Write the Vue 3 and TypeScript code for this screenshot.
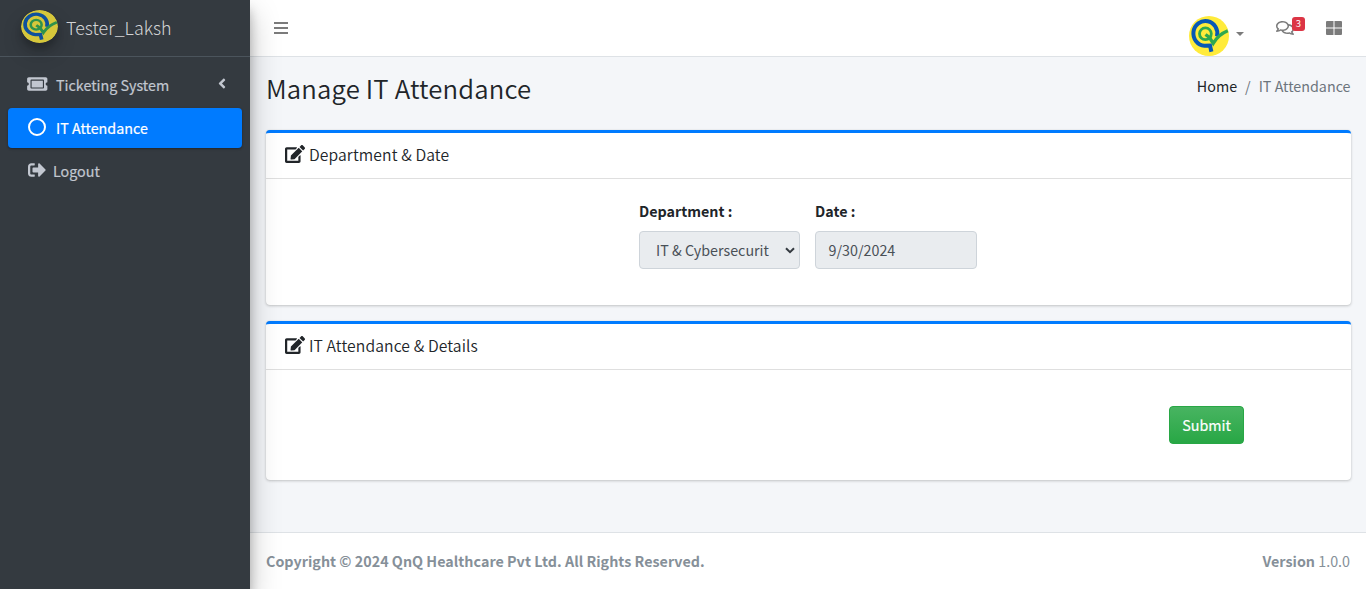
<script setup lang="ts">
import { defineComponent, h } from 'vue'

const QLogo = defineComponent({
  setup: () => () =>
    h('svg', { viewBox: '0 0 40 40', preserveAspectRatio: 'none', 'aria-hidden': 'true' }, [
      h('circle', { cx: 20, cy: 20, r: 20, fill: '#ffeb3b' }),
      h('path', { d: 'M28 20.5 A12 12.4 0 1 0 15.5 29.8 L21 29.6 L22.4 35.8', fill: 'none', stroke: '#0757b5', 'stroke-width': 4 }),
      h('circle', { cx: 16.4, cy: 17.8, r: 5.9, fill: 'none', stroke: '#2fa84f', 'stroke-width': 2.8 }),
      h('path', { d: 'M16.5 18.5 L20.5 21.5 L24.2 27.4 Q29.5 18.5 38.8 14.8', fill: 'none', stroke: '#2fa84f', 'stroke-width': 3.3 }),
    ]),
})

const icons = {
  ticket: 'M128 160h320v192H128V160zm400 96c0 26.51 21.49 48 48 48v96c0 26.51-21.49 48-48 48H48c-26.51 0-48-21.49-48-48v-96c26.51 0 48-21.49 48-48s-21.49-48-48-48v-96c0-26.51 21.49-48 48-48h480c26.51 0 48 21.49 48 48v96c-26.51 0-48 21.49-48 48zm-48-104c0-13.255-10.745-24-24-24H120c-13.255 0-24 10.745-24 24v208c0 13.255 10.745 24 24 24h336c13.255 0 24-10.745 24-24V152z',
  logout: 'M497 273L329 441c-15 15-41 4.5-41-17v-96H152c-13.3 0-24-10.7-24-24v-96c0-13.3 10.7-24 24-24h136V88c0-21.4 25.9-32 41-17l168 168c9.3 9.4 9.3 24.6 0 34zM192 436v-40c0-6.6-5.4-12-12-12H96c-17.7 0-32-14.3-32-32V160c0-17.7 14.3-32 32-32h84c6.6 0 12-5.4 12-12V76c0-6.6-5.4-12-12-12H96c-53 0-96 43-96 96v192c0 53 43 96 96 96h84c6.6 0 12-5.4 12-12z',
  angle: 'M31.7 239l136-136c9.4-9.4 24.6-9.4 33.9 0l22.6 22.6c9.4 9.4 9.4 24.6 0 33.9L127.9 256l96.4 96.4c9.4 9.4 9.4 24.6 0 33.9L201.7 409c-9.4 9.4-24.6 9.4-33.9 0l-136-136c-9.5-9.4-9.5-24.6-.1-34z',
  comments: 'M532 386.2c27.5-27.1 44-61.1 44-98.2 0-80-76.5-146.1-176.2-157.9C368.3 72.5 294.3 32 208 32 93.1 32 0 103.6 0 192c0 37 16.5 71 44 98.2-15.3 30.7-37.3 54.5-37.7 54.9-6.3 6.7-8.1 16.5-4.4 25 3.6 8.5 12 14 21.2 14 53.5 0 96.7-20.2 125.2-38.8 9.2 2.1 18.7 3.7 28.4 4.9C208.1 407.6 281.8 448 368 448c20.8 0 40.8-2.4 59.8-6.8C456.3 459.7 499.4 480 553 480c9.2 0 17.5-5.5 21.2-14 3.6-8.5 1.9-18.3-4.4-25-.4-.3-22.5-24.1-37.8-54.8zm-392.8-92.3L122.1 305c-14.1 9.1-28.5 16.3-43.1 21.4 2.7-4.7 5.4-9.7 8-14.8l15.5-31.1L77.7 256C64.2 242.6 48 220.7 48 192c0-60.7 73.3-112 160-112s160 51.3 160 112-73.3 112-160 112c-16.5 0-33-1.9-49-5.6l-19.8-4.5zM498.3 352l-24.7 24.4 15.5 31.1c2.6 5.1 5.3 10.1 8 14.8-14.6-5.1-29-12.3-43.1-21.4l-17.1-11.1-19.9 4.6c-16 3.7-32.5 5.6-49 5.6-54 0-102.2-20.1-131.3-49.7C338 339.5 416 272.9 416 192c0-3.4-.4-6.7-.7-10C479.7 196.5 528 238.8 528 288c0 28.7-16.2 50.6-29.7 64z',
  edit: 'M402.6 83.2l90.2 90.2c3.8 3.8 3.8 10 0 13.8L274.4 405.6l-92.8 10.3c-12.4 1.4-22.9-9.1-21.5-21.5l10.3-92.8L388.8 83.2c3.8-3.8 10-3.8 13.8 0zm162-22.9l-48.8-48.8c-15.2-15.2-39.9-15.2-55.2 0l-35.4 35.4c-3.8 3.8-3.8 10 0 13.8l90.2 90.2c3.8 3.8 10 3.8 13.8 0l35.4-35.4c15.2-15.3 15.2-40 0-55.2zM384 346.2V448H64V128h229.8c3.2 0 6.2-1.3 8.5-3.5l40-40c7.6-7.6 2.2-20.5-8.5-20.5H48C21.5 64 0 85.5 0 112v352c0 26.5 21.5 48 48 48h352c26.5 0 48-21.5 48-48V306.2c0-10.7-12.9-16-20.5-8.5l-40 40c-2.2 2.3-3.5 5.3-3.5 8.5z',
}
</script>

<template>
  <div class="layout">
    <aside class="sidebar">
      <div class="brand">
        <QLogo class="brand-logo" />
        <span class="brand-name">Tester_Laksh</span>
      </div>
      <nav class="menu">
        <a class="item">
          <svg class="icon ticket" viewBox="0 0 576 512"><path :d="icons.ticket" /></svg>
          <span>Ticketing System</span>
          <svg class="angle" viewBox="0 0 256 512"><path :d="icons.angle" /></svg>
        </a>
        <a class="item active">
          <svg class="icon ring" viewBox="0 0 18 18"><circle cx="9" cy="9" r="8" /></svg>
          <span>IT Attendance</span>
        </a>
        <a class="item">
          <svg class="icon out" viewBox="0 0 512 512"><path :d="icons.logout" /></svg>
          <span>Logout</span>
        </a>
      </nav>
    </aside>

    <div class="main">
      <header class="topbar">
        <svg class="bars" viewBox="0 0 14 12"><path d="M0 0h14v2H0zM0 5h14v2H0zM0 10h14v2H0z" /></svg>
        <div class="tools">
          <QLogo class="avatar" />
          <i class="caret"></i>
          <div class="chat">
            <svg viewBox="0 0 576 512"><path :d="icons.comments" /></svg>
            <span class="badge">3</span>
          </div>
          <svg class="grid" viewBox="0 0 16 14"><path d="M.7 0h6.8v6.5H0V.7zM8.5 0h6.8l.7.7v5.8H8.5zM0 7.5h7.5V14H.7L0 13.3zM8.5 7.5H16v5.8l-.7.7H8.5z" /></svg>
        </div>
      </header>

      <main class="content">
        <div class="heading">
          <h1>Manage IT Attendance</h1>
          <div class="crumbs"><span class="home">Home</span><span class="slash">/</span><span class="here">IT Attendance</span></div>
        </div>

        <section class="card first">
          <div class="card-head">
            <svg viewBox="0 0 576 512"><path :d="icons.edit" /></svg>
            <h3>Department &amp; Date</h3>
          </div>
          <div class="fields">
            <div class="field">
              <label>Department :</label>
              <div class="control select">
                <span>IT &amp; Cybersecurit</span>
                <svg viewBox="0 0 10 7"><path d="M1 1.2 5 5.2 9 1.2" /></svg>
              </div>
            </div>
            <div class="field">
              <label>Date :</label>
              <div class="control date"><span>9/30/2024</span></div>
            </div>
          </div>
        </section>

        <section class="card second">
          <div class="card-head">
            <svg viewBox="0 0 576 512"><path :d="icons.edit" /></svg>
            <h3>IT Attendance &amp; Details</h3>
          </div>
          <div class="actions"><button type="button">Submit</button></div>
        </section>
      </main>

      <footer class="footer">
        <strong>Copyright © 2024 QnQ Healthcare Pvt Ltd. All Rights Reserved.</strong>
        <div class="version"><b>Version</b> <span>1.0.0</span></div>
      </footer>
    </div>
  </div>
</template>

<style>
body { margin: 0; overflow: hidden; }
</style>

<style scoped>
* { box-sizing: border-box; }
.layout {
  display: flex;
  width: 100%;
  height: 589px;
  font-family: "Noto Sans CJK SC", "Noto Sans", sans-serif;
  font-size: 14.3px;
  line-height: 24px;
  color: #212529;
  background: #f4f6f9;
  white-space: nowrap;
}
svg { display: block; flex: none; }
.sidebar {
  position: relative;
  z-index: 2;
  flex: none;
  width: 250px;
  background: #343a40;
  color: #c2c7d0;
  box-shadow: 0 14px 28px rgba(0, 0, 0, .25), 0 10px 10px rgba(0, 0, 0, .22);
}
.brand {
  display: flex;
  align-items: center;
  height: 57px;
  padding: 0 0 3px 21px;
  border-bottom: 1px solid #4b545c;
}
.brand-logo {
  width: 37px;
  height: 33px;
  border-radius: 50%;
  opacity: .8;
  box-shadow: 0 10px 20px rgba(0, 0, 0, .19), 0 6px 6px rgba(0, 0, 0, .23);
}
.brand-name { margin: 0 0 0 8px; font-size: 17.9px; font-weight: 300; color: rgba(255, 255, 255, .8); }
.menu { padding: 8px; }
.item {
  display: flex;
  align-items: center;
  height: 40px;
  margin-bottom: 3px;
  padding-left: 19px;
  border-radius: 4px;
  -webkit-text-stroke: .2px currentColor;
}
.item.active {
  background: #007bff;
  color: #fff;
  box-shadow: 0 1px 3px rgba(0, 0, 0, .12), 0 1px 2px rgba(0, 0, 0, .24);
}
.icon { fill: currentColor; height: 18px; margin-top: -2px; }
.ticket { width: 20.5px; margin-right: 8.5px; }
.ring { width: 18px; margin: -2px 10px 0 1px; fill: none; stroke: currentColor; stroke-width: 2; }
.out { width: 18px; margin: -2px 7px 0 1px; }
.angle { width: 8px; height: 17px; margin: -3px 16px 0 auto; fill: currentColor; }
.main { display: flex; flex: 1; flex-direction: column; min-width: 0; }
.topbar {
  display: flex;
  justify-content: space-between;
  flex: none;
  height: 57px;
  background: #fff;
  border-bottom: 1px solid #dee2e6;
}
.bars { width: 14px; height: 12px; margin: 22px 0 0 24px; fill: #7b7b7b; }
.tools { display: flex; align-items: flex-start; padding-right: 24px; fill: #7b7b7b; }
.avatar { width: 40px; height: 40px; margin-top: 16px; }
.caret { margin: 32px 32px 0 7px; border: 4px solid transparent; border-top-color: #7b7b7b; border-bottom: 0; }
.chat { display: flex; margin-right: 21px; }
.chat svg { width: 18px; height: 16px; margin-top: 20px; }
.badge {
  width: 13px;
  height: 14px;
  margin: 17px 0 0 -2px;
  border-radius: 3px;
  background: #dc3545;
  color: #fff;
  font-size: 9.5px;
  line-height: 12px;
  text-align: center;
}
.grid { width: 16px; height: 14px; margin-top: 21px; }
.content { flex: 1; padding: 0 15px 0 16px; }
.heading { display: flex; justify-content: space-between; height: 73px; }
h1 { margin: 13px 0 0; font-size: 25.7px; line-height: 36px; font-weight: 350; letter-spacing: .17px; }
.crumbs { display: flex; margin: 17px .5px 0 0; color: #6c757d; }
.home { color: #212529; }
.slash { margin: 0 8px; }
.card {
  border-top: 3px solid #007bff;
  border-radius: 4px;
  background: #fff;
  box-shadow: 0 0 1px rgba(0, 0, 0, .125), 0 1px 3px rgba(0, 0, 0, .2);
}
.first { height: 175px; margin-bottom: 16px; }
.second { height: 159px; }
.card-head { display: flex; align-items: center; height: 46px; padding-left: 20px; border-bottom: 1px solid rgba(0, 0, 0, .125); }
.card-head svg { width: 20px; height: 18px; margin: -3px 3.5px 0 -.6px; fill: #212529; }
h3 { margin: -2px 0 0; font-size: 15.7px; font-weight: 350; letter-spacing: .11px; }
.fields { display: flex; gap: 15px; padding: 20px 0 0 373px; }
.field { display: flex; flex-direction: column; gap: 8px; }
label { font-weight: 700; }
.control {
  display: flex;
  align-items: center;
  justify-content: space-between;
  height: 38px;
  border: 1px solid #ced4da;
  border-radius: 4px;
  background: #e9ecef;
  color: #495057;
}
.select { width: 161px; padding: 0 4px 0 16px; }
.select svg { width: 10px; height: 7px; fill: none; stroke: #343a40; stroke-width: 2; }
.date { width: 162px; padding-left: 12.5px; }
.actions { display: flex; justify-content: flex-end; padding: 36px 107px 0 0; }
button {
  width: 75px;
  height: 38px;
  padding: 0;
  border: 1px solid #28a745;
  border-radius: 4px;
  background: #28a745 linear-gradient(180deg, #48b461, #28a745);
  color: #fff;
  font: inherit;
  -webkit-text-stroke: .2px currentColor;
}
.footer {
  display: flex;
  justify-content: space-between;
  height: 57px;
  padding: 16px 16px 0;
  border-top: 1px solid #dee2e6;
  background: #fff;
  color: #869099;
}
.footer strong { letter-spacing: .02px; }
</style>
